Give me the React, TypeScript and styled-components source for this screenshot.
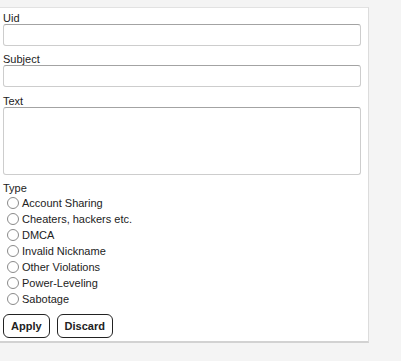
import React from 'react';
import styled, {createGlobalStyle} from 'styled-components';

const GlobalStyle = createGlobalStyle`
    html, body {
        margin: 0;
        padding: 0;
        background: #f4f4f4;
    }
    body {
        font-family: "Liberation Sans", Arial, sans-serif;
        font-size: 11px;
        color: #222;
    }
`;

const TYPES = [
    'Account Sharing',
    'Cheaters, hackers etc.',
    'DMCA',
    'Invalid Nickname',
    'Other Violations',
    'Power-Leveling',
    'Sabotage',
];

export default function App() {
    return (
        <>
            <GlobalStyle/>
            <Page>
                <Panel>
                    <Field>
                        <Label>Uid</Label>
                        <Input type="text"/>
                    </Field>
                    <Field>
                        <Label>Subject</Label>
                        <Input type="text"/>
                    </Field>
                    <Field top={1}>
                        <Label>Text</Label>
                        <TextArea/>
                    </Field>

                    <Label>Type</Label>
                    <RadioList>
                        {TYPES.map(t => (
                            <RadioRow key={t}>
                                <Radio type="radio" name="type" value={t}/>
                                {t}
                            </RadioRow>
                        ))}
                    </RadioList>

                    <Buttons>
                        <Button>Apply</Button>
                        <Button>Discard</Button>
                    </Buttons>
                </Panel>
            </Page>
        </>
    );
}

const Page = styled.div`
    padding-top: 7px;
    height: 354px;
`;

const Panel = styled.div`
    width: 358px;
    padding: 2px 7px 3px 3px;
    background: #fff;
    border-top: 1px solid #e2e2e2;
    border-right: 1px solid #dcdcdc;
    border-bottom: 2px solid #d2d2d2;
`;

const Field = styled.div<{top?: number}>`
    display: flex;
    flex-direction: column;
    padding-top: ${p => p.top || 0}px;
    padding-bottom: 5px;
`;

const Label = styled.div`
    line-height: 14px;
    font-size: 11px;
    padding-top: 1px;
    height: 13px;
`;

const Input = styled.input`
    box-sizing: border-box;
    width: 358px;
    height: 22px;
    margin: 0;
    padding: 2px 4px;
    border: 1px solid #cdcdcd;
    border-top-color: #a3a3a3;
    border-radius: 3px;
    font: inherit;
    outline: none;
`;

const TextArea = styled.textarea`
    box-sizing: border-box;
    width: 358px;
    height: 68px;
    margin: 0;
    padding: 2px 4px;
    border: 1px solid #cdcdcd;
    border-top-color: #a3a3a3;
    border-radius: 3px;
    font: inherit;
    resize: none;
    outline: none;
`;

const RadioList = styled.div`
    display: flex;
    flex-direction: column;
`;

const RadioRow = styled.label`
    display: flex;
    align-items: flex-end;
    height: 16px;
    line-height: 14px;
    font-size: 11px;
`;

const Radio = styled.input`
    appearance: none;
    box-sizing: border-box;
    width: 12px;
    height: 12px;
    margin: 3px 3px 1px 4px;
    border: 1px solid #8a8a8a;
    border-radius: 50%;
    background: #fff;
`;

const Buttons = styled.div`
    display: flex;
    gap: 7px;
    margin-top: 8px;
`;

const Button = styled.button`
    box-sizing: border-box;
    height: 24px;
    padding: 0 7px;
    background: #fff;
    border: 1px solid #222;
    border-radius: 6px;
    font-family: "Liberation Sans", Arial, sans-serif;
    font-size: 11px;
    font-weight: bold;
    color: #222;
`;
